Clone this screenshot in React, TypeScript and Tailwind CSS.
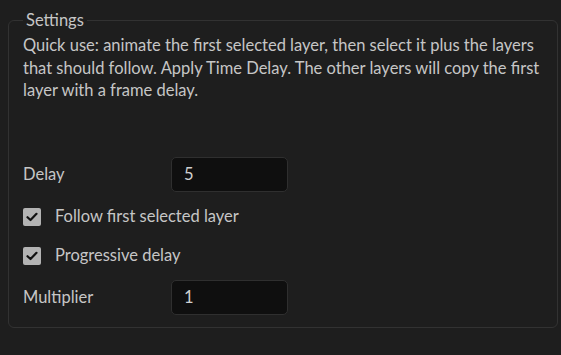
const Checkbox = ({ label }: { label: string }) => (
  <label className="flex items-center gap-[14px] h-[18px]">
    <span className="w-[18px] h-[18px] rounded-[2px] bg-[#b3b3b3] flex items-center justify-center">
      <svg width="12" height="10" viewBox="0 0 12 10" fill="none">
        <path d="M1.5 5.2 L4.5 8 L10.5 1.8" stroke="#111" strokeWidth="2.2" strokeLinecap="round" strokeLinejoin="round" />
      </svg>
    </span>
    <span>{label}</span>
  </label>
)

const Field = ({ label, value }: { label: string; value: string }) => (
  <div className="flex items-center h-[34px]">
    <span className="w-[148px]">{label}</span>
    <div className="w-[117px] h-[35px] rounded-[5px] border border-[#2f2f2f] bg-[#0f0f0f] flex items-center px-3 text-[#d0d0d0]">
      {value}
    </div>
  </div>
)

export default function App() {
  return (
    <div className="w-[561px] h-[355px] bg-[#1e1e1e] pt-[9px] pl-2 pr-[3px] text-[#c6c6c6] text-[16.5px] font-['Lato',sans-serif]">
      <fieldset className="border border-[#323232] rounded-[6px] pl-[14px] pr-3 pb-3 h-[319px]">
        <legend className="px-[3px] leading-[22px]">Settings</legend>
        <p className="leading-[22.5px] mt-[3px]">
          Quick use: animate the first selected layer, then select it plus the layers that should follow. Apply Time Delay. The other layers will copy the first layer with a frame delay.
        </p>
        <div className="mt-[56px] flex flex-col">
          <Field label="Delay" value="5" />
          <div className="mt-[16px]">
            <Checkbox label="Follow first selected layer" />
          </div>
          <div className="mt-[21px]">
            <Checkbox label="Progressive delay" />
          </div>
          <div className="mt-[16px]">
            <Field label="Multiplier" value="1" />
          </div>
        </div>
      </fieldset>
    </div>
  )
}
